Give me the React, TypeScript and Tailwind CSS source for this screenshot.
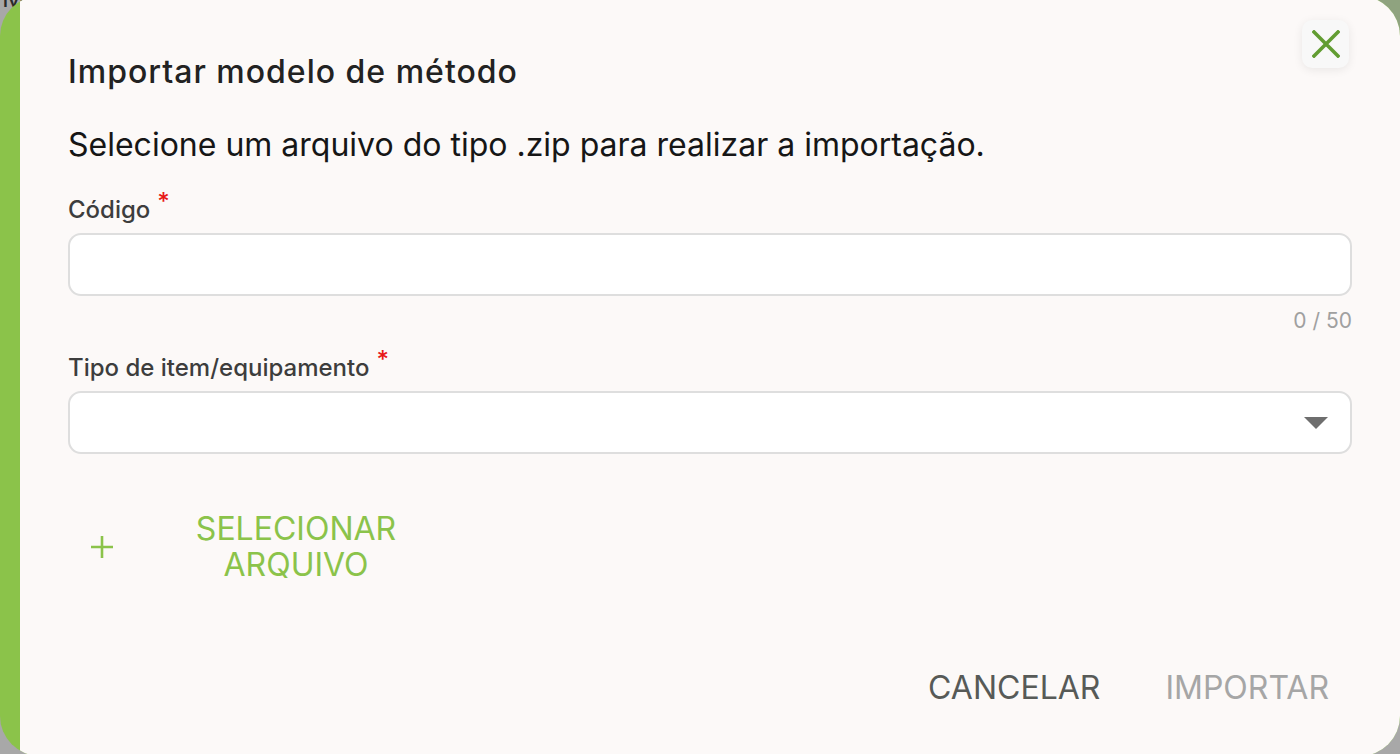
import React from "react";

export default function App() {
  return (
    <div className="relative w-[1400px] h-[754px] overflow-hidden bg-[#a8a8a8] font-['Inter',sans-serif]">
      <div className="absolute left-[2px] top-[-22px] text-[26px] text-[#2a2a2a]">Mé</div>
      <div className="absolute right-0 top-0 w-[60px] h-[30px] bg-[#8fa37f]"></div>
      <div className="absolute left-0 top-[-4px] w-[1400px] h-[760px] rounded-[40px] overflow-hidden bg-[#8bc34a] pl-[20px]">
        <div className="relative h-full bg-[#fcf9f8] px-[48px] pt-[56px] flex flex-col">
          <button className="absolute right-[51px] top-[24px] w-[47px] h-[48px] rounded-[10px] bg-[#f8f8f8] shadow-[0_2px_10px_rgba(0,0,0,0.08)] flex items-center justify-center">
            <svg width="28" height="28" viewBox="0 0 28 28">
              <path d="M2 2 L26 26 M26 2 L2 26" stroke="#629d32" strokeWidth="3.6" strokeLinecap="square" fill="none" />
            </svg>
          </button>
          <h2 className="text-[32px] leading-[40px] font-medium tracking-[1px] text-[#222]">Importar modelo de método</h2>
          <p className="mt-[33px] text-[32px] leading-[40px] text-[#161616]">
            Selecione um arquivo do tipo .zip para realizar a importação.
          </p>
          <label className="block mt-[29px] text-[24px] leading-[32px] font-medium text-[#3d3d3d]">
            Código<span className="relative top-[-8px] ml-[7px] text-[#e81818]">*</span>
          </label>
          <div className="mt-[7px] h-[63px] rounded-[13px] border-2 border-[#dedede] bg-white"></div>
          <div className="mt-[11px] text-right text-[21px] leading-[28px] text-[#a0a0a0]">0 / 50</div>
          <label className="block mt-[17px] text-[24px] leading-[32px] font-medium text-[#3d3d3d]">
            Tipo de item/equipamento<span className="relative top-[-8px] ml-[7px] text-[#e81818]">*</span>
          </label>
          <div className="mt-[7px] h-[63px] rounded-[13px] border-2 border-[#dedede] bg-white flex items-center justify-end pr-[22px]">
            <svg width="24" height="12" viewBox="0 0 24 12">
              <path d="M0 0 L24 0 L12 12 Z" fill="#6e6e6e" />
            </svg>
          </div>
          <button className="mt-[57px] self-start flex items-center text-[#8bc34a]">
            <svg className="ml-[23px]" width="22" height="22" viewBox="0 0 22 22">
              <path d="M11 0 V22 M0 11 H22" stroke="#8bc34a" strokeWidth="2.6" fill="none" />
            </svg>
            <span className="ml-[63px] w-[240px] text-center text-[32px] leading-[36px]">SELECIONAR ARQUIVO</span>
          </button>
          <div className="mt-[85px] flex justify-end gap-[65px] pr-[23px] text-[32px] leading-[40px]">
            <button className="text-[#575a57]">CANCELAR</button>
            <button className="text-[#a6a6a6]">IMPORTAR</button>
          </div>
        </div>
      </div>
    </div>
  );
}
